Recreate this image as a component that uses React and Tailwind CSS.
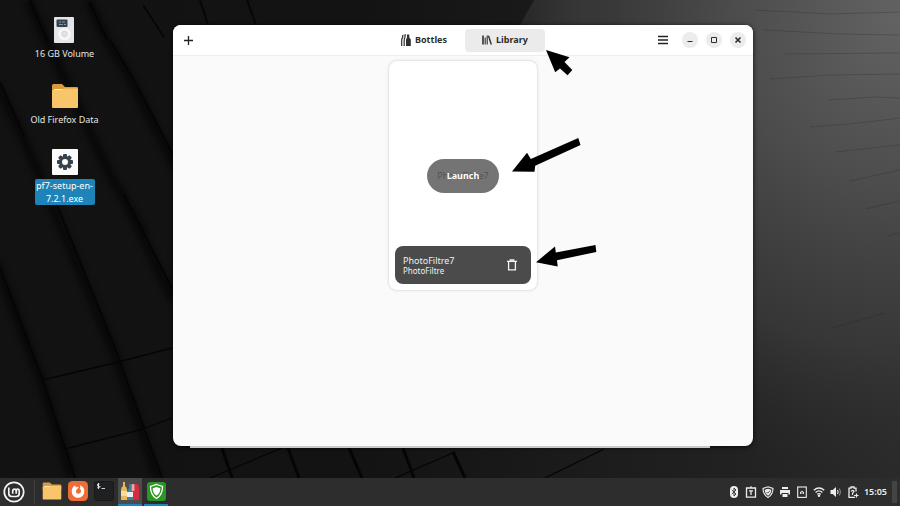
import React from "react";

function Wallpaper() {
  return (
    <svg className="absolute inset-0 h-full w-full" viewBox="0 0 900 478" preserveAspectRatio="none" aria-hidden="true">
      <defs>
        <linearGradient id="base" x1="0" y1="0" x2="1" y2="0">
          <stop offset="0" stopColor="#121212" />
          <stop offset="0.4" stopColor="#131313" />
          <stop offset="0.58" stopColor="#191919" />
          <stop offset="0.83" stopColor="#222222" />
          <stop offset="1" stopColor="#2a2a2a" />
        </linearGradient>
        <radialGradient id="glow" gradientUnits="userSpaceOnUse" cx="900" cy="20" r="470">
          <stop offset="0" stopColor="#636363" />
          <stop offset="0.35" stopColor="#505050" stopOpacity="0.92" />
          <stop offset="0.7" stopColor="#3c3c3c" stopOpacity="0.75" />
          <stop offset="1" stopColor="#2c2c2c" stopOpacity="0" />
        </radialGradient>
        <linearGradient id="edge" x1="0" y1="0" x2="1" y2="0">
          <stop offset="0" stopColor="#383838" stopOpacity="0" />
          <stop offset="1" stopColor="#383838" stopOpacity="0.5" />
        </linearGradient>
        <filter id="soft">
          <feGaussianBlur stdDeviation="3" />
        </filter>
      </defs>
      <rect width="900" height="478" fill="url(#base)" />
      <path d="M534 0H900V478H700L500 60Z" fill="url(#glow)" />
      <path d="M534 0H620V40H514Z" fill="url(#edge)" />
      <g stroke="#000" strokeWidth="9" fill="none" opacity="0.55" filter="url(#soft)">
        <path d="M28 0L47 42L75 100L110 175L145 235" />
        <path d="M88 0L107 40L130 78L176 168" />
        <path d="M-4 84L24 140L52 205L115 355L158 478" />
        <path d="M-4 262L40 378L72 478" />
        <path d="M120 190L173 300" />
      </g>
      <g stroke="#040404" strokeWidth="2" fill="none" opacity="0.8">
        <path d="M30 0L48 42" />
        <path d="M90 3L107 40M110 40L135 82L173 155" />
        <path d="M143 5L164 37M200 0L208 25M247 0L256 25" />
        <path d="M0 82L24 136M57 205L118 356L162 478" />
        <path d="M0 268L42 378L75 478" />
        <path d="M124 195L173 290" />
      </g>
      <g stroke="#050505" strokeWidth="1.3" fill="none">
        <path d="M43 380L118 362L172 348M65 449L140 430L172 418" />
        <path d="M210 478L282 448M395 478L455 452M545 478L604 449" />
      </g>
      <g stroke="#050505" strokeWidth="3" fill="none">
        <path d="M222 448L232 478M288 448L299 478M349 448L362 478M403 448L414 478M453 452L465 478" />
      </g>
      <g stroke="#1c1c1c" strokeWidth="1" opacity="0.22" fill="none">
        <path d="M755 10L830 14L900 12M765 30L840 34L900 35M785 54L900 53M770 79L830 75L900 74M828 100L875 97L900 98" />
        <path d="M810 127L850 124L900 118M835 152L900 145M850 181L900 170M865 209L900 201M888 236L900 233M832 328L885 313" />
      </g>
    </svg>
  );
}

function DriveIcon() {
  return (
    <svg width="20" height="26" viewBox="0 0 20 26">
      <rect width="20" height="26" rx="1" fill="#e3e5e8" />
      <rect x="2.500" y="2.500" width="11" height="7.500" rx="1" fill="#36424e" />
      <path d="M5 5h2M8 5h3M5 7.500h4M10 7.500h2" stroke="#8795a3" />
      <circle cx="10.500" cy="17" r="6.300" fill="#f6f6f7" />
      <circle cx="10.500" cy="17" r="2.800" fill="#e1e2e5" stroke="#d3d5d8" />
    </svg>
  );
}

function FolderIcon({ size }) {
  return (
    <svg width={size} height={size} viewBox="0 0 28 28">
      <path d="M1 3.500Q1 2 2.500 2H11l3 3h12q1 0 1 1v6H1z" fill="#d99a3b" />
      <path d="M3 7h22v5H3z" fill="#fff3d8" />
      <path d="M1 8h9l3-1.500h13q1 0 1 1V25q0 1-1 1H2q-1 0-1-1z" fill="#f9c56b" />
    </svg>
  );
}

function GearIcon() {
  return (
    <svg width="26" height="26" viewBox="0 0 26 26">
      <rect width="26" height="26" rx="1" fill="#fbfbfc" />
      <g fill="#37414c">
        {[0, 45, 90, 135].map((a) => (
          <rect key={a} x="11" y="5" width="4" height="16" rx="1" transform={`rotate(${a} 13 13)`} />
        ))}
        <circle cx="13" cy="13" r="6" />
      </g>
      <circle cx="13" cy="13" r="3" fill="#fbfbfc" />
    </svg>
  );
}

const desktopItems = [
  { label: "16 GB Volume", icon: <DriveIcon /> },
  { label: "Old Firefox Data", icon: <FolderIcon size={28} /> },
  { label: "pf7-setup-en-7.2.1.exe", icon: <GearIcon />, selected: true },
];

function DesktopIcons() {
  return (
    <ul className="relative flex w-[129px] flex-col pt-4">
      {desktopItems.map((item) => (
        <li key={item.label} className="flex h-[66px] justify-center">
          <button className="flex flex-col items-center gap-[3px] text-[9px] leading-[13px] text-[#e6e6e6]">
            <span className="flex h-7 items-center">{item.icon}</span>
            {item.selected ? (
              <span className="w-[60px] rounded-xs bg-[#1d83b8] text-white">{item.label}</span>
            ) : (
              <span className="whitespace-nowrap">{item.label}</span>
            )}
          </button>
        </li>
      ))}
    </ul>
  );
}

function BottlesIcon() {
  return (
    <svg width="10" height="12" viewBox="0 0 10 12" fill="none" stroke="#303030">
      <path d="M.7 12V6Q.7 4.500 1.700 3.500V1.500L2.500 1M3.200 12V6Q3.200 4.500 4 3.500V1L5 .7" strokeWidth="1.200" />
      <path d="M5 12V5.500L6 3.500V.5H8.300V3.500L9.800 5.500V12Z" fill="#303030" stroke="none" />
    </svg>
  );
}

function LibraryIcon() {
  return (
    <svg width="10" height="10" viewBox="0 0 10 10" fill="none" stroke="#303030">
      <path d="M1 .5V9.500" strokeWidth="1.600" />
      <path d="M3.200 2.500V9.500M5.200 .5V9.500" strokeWidth="1.100" />
      <path d="M6.500 .7L9.300 9.500" strokeWidth="1.400" />
    </svg>
  );
}

function CursorArrow() {
  return (
    <svg className="pointer-events-none absolute top-[21px] left-[81px] z-10" width="27" height="26" viewBox="0 0 27 26" aria-hidden="true">
      <path d="M0 0L23.500 7.300L18.500 12L26.300 20L21.500 25.300L14 18.500L9.200 22.300Z" fill="#000" />
    </svg>
  );
}

function Tab({ icon, label, active, children }) {
  return (
    <div className="relative">
      <button
        className={
          active
            ? "flex h-[23px] w-20 items-center justify-center gap-1 rounded bg-[#ebebeb]"
            : "flex h-[23px] w-20 items-center justify-center gap-1 rounded"
        }
      >
        {icon}
        {label}
      </button>
      {children}
    </div>
  );
}

const windowControls = [
  { label: "Minimize", d: "M2.500 6.500H7.500" },
  { label: "Maximize", d: "M2.500 2.500H7.500V7.500H2.500Z" },
  { label: "Close", d: "M2.500 2.500L7.500 7.500M7.500 2.500L2.500 7.500", width: 1.6 },
];

function HeaderBar() {
  return (
    <header className="grid h-[31px] shrink-0 grid-cols-[1fr_auto_1fr] items-center rounded-t-lg border-b border-[#ededed] bg-white pr-[7px] pl-[10px] text-[9px] font-bold text-[#2c2c2c]">
      <button aria-label="New bottle" className="justify-self-start">
        <svg width="11" height="11" viewBox="0 0 11 11" stroke="#222" strokeWidth="1.300">
          <path d="M5.500 1V10M1 5.500H10" />
        </svg>
      </button>
      <nav className="flex gap-px">
        <Tab icon={<BottlesIcon />} label="Bottles" />
        <Tab icon={<LibraryIcon />} label="Library" active>
          <CursorArrow />
        </Tab>
      </nav>
      <div className="flex items-center gap-2 justify-self-end">
        <button aria-label="Menu" className="mr-0.5">
          <svg width="18" height="10" viewBox="0 0 18 10" stroke="#222" strokeWidth="1.400">
            <path d="M4 1.500H14M4 5H14M4 8.500H14" />
          </svg>
        </button>
        {windowControls.map((c) => (
          <button key={c.label} aria-label={c.label} className="grid size-4 place-items-center rounded-full bg-[#ececec]">
            <svg width="10" height="10" viewBox="0 0 10 10" fill="none" stroke="#2b2b2b" strokeWidth={c.width || 1}>
              <path d={c.d} />
            </svg>
          </button>
        ))}
      </div>
    </header>
  );
}

function ProgramCard() {
  return (
    <article className="relative grid h-[229px] w-[148px] rounded-lg bg-white p-[6px] shadow-[0_0_3px_rgba(0,0,0,0.22)]">
      <span className="col-start-1 row-start-1 place-self-center text-[9px] text-[#222]">PhotoFiltre7</span>
      <button className="z-10 col-start-1 row-start-1 h-[34px] w-[72px] place-self-center rounded-full bg-[#5c5c5c]/85 text-[9px] font-bold text-white">
        Launch
      </button>
      <div className="col-start-1 row-start-1 flex h-[38px] items-center justify-between self-end rounded-lg bg-[#4b4b4b] pr-[13px] pl-2 text-[#f0f0f0]">
        <div>
          <h2 className="text-[9px] leading-[11px]">PhotoFiltre7</h2>
          <p className="text-[8px] leading-[10px]">PhotoFiltre</p>
        </div>
        <button aria-label="Remove from library">
          <svg width="12" height="12" viewBox="0 0 12 12" fill="none" stroke="#f4f4f4" strokeWidth="1.300">
            <path d="M1 2.300H11M4.300 2V.8H7.700V2M2.600 2.500V10.800H9.400V2.500" />
          </svg>
        </button>
      </div>
      <svg className="pointer-events-none absolute top-[77px] left-[122px]" width="70" height="34" viewBox="0 0 70 34" aria-hidden="true">
        <path d="M1 33.500L16 14.700L19.800 21L67.300 0L69.500 7L24.200 27.800L23.500 33.700Z" fill="#000" />
      </svg>
      <svg className="pointer-events-none absolute top-[184px] left-[147px]" width="61" height="23" viewBox="0 0 61 23" aria-hidden="true">
        <path d="M0 17.200L19 1.500L19.800 7.500L59.500 0L60.300 7L21 15.200L21.700 21.500Z" fill="#000" />
      </svg>
    </article>
  );
}

function BottlesWindow() {
  return (
    <section
      aria-label="Bottles"
      className="absolute top-[25px] right-[147px] bottom-8 left-[173px] flex flex-col rounded-lg bg-[#fafafa] shadow-[0_1px_5px_rgba(0,0,0,0.8)]"
    >
      <HeaderBar />
      <div className="flex flex-1 items-start justify-center pt-[5px]">
        <ProgramCard />
      </div>
      <div className="absolute top-full right-[43px] left-[17px] h-[2px] bg-[#c9c9c9]" />
    </section>
  );
}

function MintLogo() {
  return (
    <svg width="22" height="22" viewBox="0 0 22 22" fill="none" stroke="#f2f2f2">
      <circle cx="11" cy="11" r="9.700" strokeWidth="1.800" />
      <path d="M5.800 6.500V12.500Q5.800 15.500 8.800 15.500H13.200Q16.200 15.500 16.200 12.500V10Q16.200 8.200 14.700 8.200T13.200 10V12.700M13.200 10Q13.200 8.200 11.500 8.200T9.700 10V12.700" strokeWidth="1.700" />
    </svg>
  );
}

function FirefoxIcon() {
  return (
    <svg width="20" height="20" viewBox="0 0 20 20">
      <rect width="20" height="20" rx="4.500" fill="#ee6c35" />
      <path d="M4.500 7Q5.500 5 7.300 4.200Q7 5.500 8 6.300Q9.500 5.500 11 6Q9.500 6.700 9.500 8Q8 8.500 8 10.200A2.500 2.500 0 0 0 13 10.300Q13 8.500 11.700 7.500Q13 6.500 12 4Q16.500 6 16.300 10.500A6.300 6.300 0 0 1 3.700 10.500Q3.700 8.500 4.500 7Z" fill="#fff" />
    </svg>
  );
}

function TerminalIcon() {
  return (
    <svg width="20" height="20" viewBox="0 0 20 20">
      <rect x=".5" y=".5" width="19" height="19" rx="2" fill="#1f2022" stroke="#191919" />
      <path d="M5.500 3Q3.300 2.600 3.300 4T5.600 5.500T3.200 6.800M4.500 2V8M7.500 7.500H11" stroke="#e8e8e8" strokeWidth=".9" fill="none" />
    </svg>
  );
}

function BottlesAppIcon() {
  return (
    <svg width="18" height="18" viewBox="0 0 18 18">
      <path d="M0 18V8Q0 5 2 4V0H4V4Q6 5 6 8V18Z" fill="#e8b75a" />
      <rect y="9" width="6" height="5" fill="#f4dda4" />
      <path d="M6 18V9L8 6V2H10V6L12 9V18Z" fill="#3f7f9b" />
      <rect x="6" y="10" width="6" height="5" fill="#e7eef0" />
      <path d="M12 18V5Q12 3 14 2H16Q18 3 18 5V18Z" fill="#d92c3b" />
      <rect x="10.500" y="2" width="3" height="7" rx="1" fill="#f0a3a4" />
    </svg>
  );
}

function ShieldAppIcon() {
  return (
    <svg width="19" height="19" viewBox="0 0 19 19">
      <rect width="19" height="19" rx="3" fill="#2b9527" />
      <path d="M9.500 2.500L15.500 4.500Q15.800 12.500 9.500 16.500Q3.200 12.500 3.500 4.500Z" fill="none" stroke="#fff" strokeWidth="1.300" />
      <path d="M9.500 5L13.300 6.300Q13.300 11.300 9.500 13.800Q5.700 11.300 5.700 6.300Z" fill="#fff" />
    </svg>
  );
}

const launchers = [
  { label: "Files", icon: <FolderIcon size={20} /> },
  { label: "Firefox", icon: <FirefoxIcon /> },
  { label: "Terminal", icon: <TerminalIcon /> },
  { label: "Bottles", icon: <BottlesAppIcon />, state: "border-[#1d83b8] bg-[#4c4c4c]" },
  { label: "Shield", icon: <ShieldAppIcon />, state: "border-[#1d83b8]" },
];

const trayIcons = [
  {
    label: "Bluetooth",
    art: (
      <>
        <rect x="2" y="0" width="8" height="12" rx="4" fill="#eee" stroke="none" />
        <path d="M3.800 4L8 8L6 10V2L8 4L3.800 8" stroke="#2d2d2d" strokeWidth=".9" />
      </>
    ),
  },
  {
    label: "Notes",
    art: <path d="M1.500 2H10.500V11.200H1.500ZM4 4.800H8M6 4.800V9M6 .2V2" strokeWidth="1.300" />,
  },
  {
    label: "Updates",
    art: (
      <>
        <path d="M6 .8L11 2.500Q11 8.500 6 11.500Q1 8.500 1 2.500Z" />
        <path d="M6 2.700L9.300 3.800Q9.300 7.700 6 9.700Q2.700 7.700 2.700 3.800Z" fill="#eee" stroke="none" />
        <path d="M4.300 5.800L5.700 7.200L8 4.800" stroke="#2d2d2d" strokeWidth=".8" />
      </>
    ),
  },
  {
    label: "Printer",
    art: (
      <>
        <path d="M3 1H9V3H3ZM1 4H11V8.500H9.500V7H2.500V8.500H1Z" fill="#eee" stroke="none" />
        <path d="M3.500 8H8.500V11H3.500Z" fill="#eee" stroke="none" />
      </>
    ),
  },
  {
    label: "Keyboard layout",
    art: (
      <>
        <rect x="1.700" y="1" width="8.600" height="10.400" />
        <path d="M4.500 8V6Q6 4 7.500 6V8M4.500 7H7.500" strokeWidth=".9" />
      </>
    ),
  },
  {
    label: "Wi-Fi",
    art: (
      <>
        <path d="M.8 4.300Q6 -.2 11.200 4.300M2.600 6.400Q6 3.500 9.400 6.400M4.200 8.300Q6 6.900 7.800 8.300" strokeWidth="1.300" />
        <circle cx="6" cy="9.800" r="1.200" fill="#eee" stroke="none" />
      </>
    ),
  },
  {
    label: "Volume",
    art: (
      <>
        <path d="M.5 4H2.700L6 1V11L2.700 8H.5Z" fill="#eee" stroke="none" />
        <path d="M7.500 4Q8.800 6 7.500 8" />
        <path d="M9.200 2.500Q11.500 6 9.200 9.500" stroke="#888" />
      </>
    ),
  },
  {
    label: "Battery",
    art: (
      <>
        <path d="M8 11.300H2V2.200H4V1H7V2.200H9V5.500" strokeWidth="1.300" />
        <path d="M4 5.500Q5.500 3.500 7 5.200L5.500 7.500V9M7 9.500H11.500M9.500 7.500V11.500" strokeWidth="1.200" />
      </>
    ),
  },
];

function Taskbar() {
  return (
    <footer className="flex h-7 shrink-0 items-center justify-between bg-[#2d2d2d] px-[3px]">
      <div className="flex h-full items-center">
        <button aria-label="Menu">
          <MintLogo />
        </button>
        <span className="mr-[5px] ml-[9px] h-6 w-px bg-[#404040]" />
        <nav className="flex h-full gap-[2px]">
          {launchers.map((l) => (
            <button
              key={l.label}
              aria-label={l.label}
              className={`grid h-full w-6 place-items-center border-b-2 ${l.state || "border-transparent"}`}
            >
              {l.icon}
            </button>
          ))}
        </nav>
      </div>
      <div className="flex items-center">
        <ul className="flex gap-[5px]">
          {trayIcons.map((t) => (
            <li key={t.label}>
              <button aria-label={t.label} className="block">
                <svg width="12" height="12" viewBox="0 0 12 12" fill="none" stroke="#eee" strokeWidth="1.100">
                  {t.art}
                </svg>
              </button>
            </li>
          ))}
        </ul>
        <time className="mr-[5px] ml-[5px] text-[9px] font-semibold text-[#ededed]">15:05</time>
        <span className="h-[22px] w-[5px] bg-[#444]" />
      </div>
    </footer>
  );
}

export default function App() {
  return (
    <div className="flex min-h-screen flex-col bg-[#121212] font-['Noto_Sans','Open_Sans',sans-serif]">
      <main className="relative flex-1">
        <Wallpaper />
        <DesktopIcons />
        <BottlesWindow />
      </main>
      <Taskbar />
    </div>
  );
}
